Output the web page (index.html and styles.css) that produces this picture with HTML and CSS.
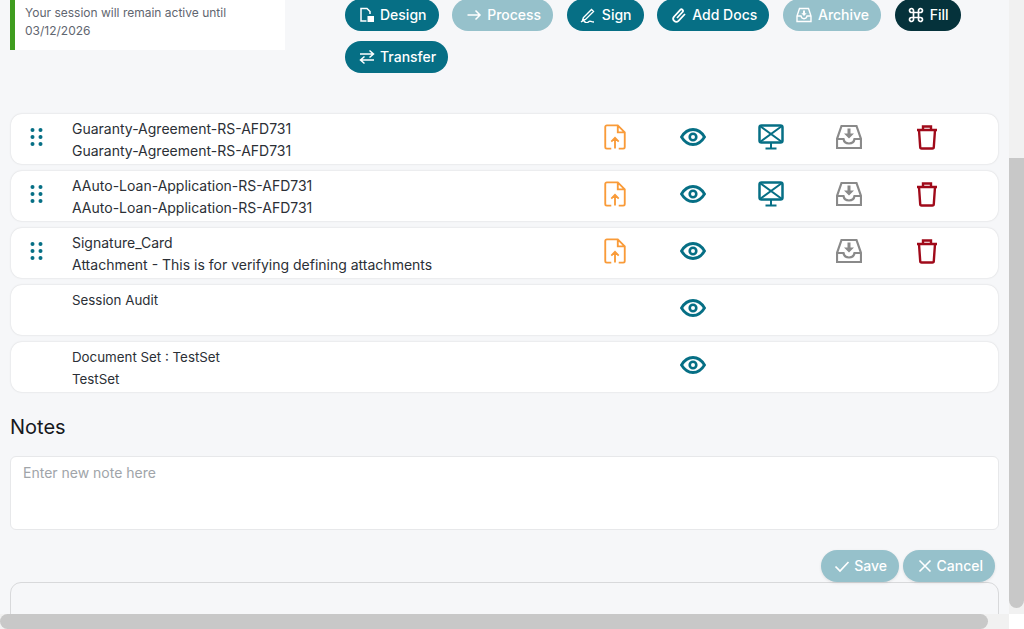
FILE: index.html
```html
<!DOCTYPE html>
<html lang="en">
<head>
<meta charset="utf-8">
<title>Session documents</title>
<link rel="stylesheet" href="styles.css">
</head>
<body>
<svg class="defs" width="0" height="0" aria-hidden="true">
  <symbol id="i-upload" viewBox="0 0 24 28"><path d="M8 26.500H3.200A1.700 1.700 0 0 1 1.500 24.800V3.200A1.700 1.700 0 0 1 3.200 1.500H15l7.500 7.500v15.800a1.700 1.700 0 0 1-1.700 1.700H16M15 1.500V9h7.500M12 26.500V15M8 19l4-4 4 4" fill="none" stroke="currentColor" stroke-width="2"/></symbol>
  <symbol id="i-eye" viewBox="0 0 26 18"><path d="M1.500 9C4.500 4 8.500 1.500 13 1.500S21.500 4 24.500 9c-3 5-7 7.500-11.500 7.500S4.500 14 1.500 9Z" fill="none" stroke="currentColor" stroke-width="2.800"/><circle cx="13" cy="9" r="3.300" fill="none" stroke="currentColor" stroke-width="2.600"/></symbol>
  <symbol id="i-screen" viewBox="0 0 26 26"><rect x="1.500" y="1.500" width="23" height="17" rx="2" fill="none" stroke="currentColor" stroke-width="2.500"/><path d="M2 2l22 16M24 2L2 18" fill="none" stroke="currentColor" stroke-width="2"/><path d="M13 19v5M7.500 24.500h11" fill="none" stroke="currentColor" stroke-width="2"/></symbol>
  <symbol id="i-inbox" viewBox="0 0 26 26"><path d="M5.500 2h15L25 15v9H1v-9L5.500 2ZM1 15h6.500c.5 3 2.500 4.500 5.500 4.500s5-1.500 5.500-4.500H25" fill="none" stroke="currentColor" stroke-width="2.200"/><path d="M11.500 4.500h3v5H18L13 14.500 8 9.500h3.500Z" fill="currentColor"/></symbol>
  <symbol id="i-trash" viewBox="0 0 22 26"><path d="M1 6h20M7 6V2.500h8V6M3 6l1.200 17a1.500 1.500 0 0 0 1.500 1.500h10.600a1.500 1.500 0 0 0 1.500-1.500L19 6" fill="none" stroke="currentColor" stroke-width="2.400"/></symbol>
  <symbol id="i-grip" viewBox="0 0 12 18"><circle cx="2" cy="2" r="2" fill="currentColor"/><circle cx="10" cy="2" r="2" fill="currentColor"/><circle cx="2" cy="9" r="2" fill="currentColor"/><circle cx="10" cy="9" r="2" fill="currentColor"/><circle cx="2" cy="16" r="2" fill="currentColor"/><circle cx="10" cy="16" r="2" fill="currentColor"/></symbol>
</svg>

<main class="page">
  <header class="top">
    <div class="session">Your session will remain active until 03/12/2026</div>
    <nav class="actions">
      <button class="pill">
        <svg class="pill-icon" viewBox="0 0 16 16"><path d="M7.500 14H2V1.500h6l3 3V7" fill="none" stroke="currentColor" stroke-width="1.500"/><path d="M8.500 9H15V15H8.500z" fill="currentColor"/></svg>Design</button>
      <button class="pill is-off">
        <svg class="pill-icon" viewBox="0 0 16 16"><path d="M1.500 8h12.500M9.500 3.500 14 8l-4.500 4.500" fill="none" stroke="currentColor" stroke-width="1.500"/></svg>Process</button>
      <button class="pill">
        <svg class="pill-icon" viewBox="0 0 16 16"><path d="M3.500 10.500 11.500 2.500l2 2-8 8-3 1ZM1 15c2-1.500 3-1.500 4 0s3 .5 4-.5 2 .5 5 .5" fill="none" stroke="currentColor" stroke-width="1.400"/></svg>Sign</button>
      <button class="pill">
        <svg class="pill-icon" viewBox="0 0 16 16"><path d="M6 11 11.500 5a1.500 1.500 0 0 0-2.200-2.200L3.200 9.500a3 3 0 0 0 4.300 4.300L14 7" fill="none" stroke="currentColor" stroke-width="1.800"/></svg>Add Docs</button>
      <button class="pill is-off">
        <svg class="pill-icon" viewBox="0 0 16 16"><path d="M3.500 1.500h9L15 9v5.500H1V9ZM1 9h4c.3 1.800 1.400 2.700 3 2.700S10.700 10.800 11 9h4" fill="none" stroke="currentColor" stroke-width="1.400"/><path d="M7 3.500h2v2.700h1.700L8 9 5.300 6.200H7Z" fill="currentColor"/></svg>Archive</button>
      <button class="pill is-dark">
        <svg class="pill-icon" viewBox="0 0 16 16"><path d="M5.500 5.500h5v5h-5ZM5.500 5.500H3.700a2 2 0 1 1 1.800-1.800ZM10.500 5.500V3.700a2 2 0 1 1 1.800 1.800ZM10.500 10.500h1.800a2 2 0 1 1-1.800 1.800ZM5.500 10.500v1.800a2 2 0 1 1-1.800-1.800Z" fill="none" stroke="currentColor" stroke-width="1.700"/></svg>Fill</button>
      <button class="pill">
        <svg class="pill-icon" viewBox="0 0 16 16"><path d="M1 5h13M10.500 1.500 14.500 5l-4 3.500M15 11H2M5.500 7.500 1.500 11l4 3.500" fill="none" stroke="currentColor" stroke-width="1.500"/></svg>Transfer</button>
    </nav>
  </header>

  <section class="docs">
    <article class="doc">
      <svg class="grip"><use href="#i-grip"/></svg>
      <div class="doc-text"><div>Guaranty-Agreement-RS-AFD731</div><div>Guaranty-Agreement-RS-AFD731</div></div>
      <div class="doc-icons">
        <svg class="ic orange"><use href="#i-upload"/></svg>
        <svg class="ic teal"><use href="#i-eye"/></svg>
        <svg class="ic teal"><use href="#i-screen"/></svg>
        <svg class="ic grey"><use href="#i-inbox"/></svg>
        <svg class="ic red"><use href="#i-trash"/></svg>
      </div>
    </article>
    <article class="doc">
      <svg class="grip"><use href="#i-grip"/></svg>
      <div class="doc-text"><div>AAuto-Loan-Application-RS-AFD731</div><div>AAuto-Loan-Application-RS-AFD731</div></div>
      <div class="doc-icons">
        <svg class="ic orange"><use href="#i-upload"/></svg>
        <svg class="ic teal"><use href="#i-eye"/></svg>
        <svg class="ic teal"><use href="#i-screen"/></svg>
        <svg class="ic grey"><use href="#i-inbox"/></svg>
        <svg class="ic red"><use href="#i-trash"/></svg>
      </div>
    </article>
    <article class="doc">
      <svg class="grip"><use href="#i-grip"/></svg>
      <div class="doc-text"><div>Signature_Card</div><div>Attachment - This is for verifying defining attachments</div></div>
      <div class="doc-icons">
        <svg class="ic orange"><use href="#i-upload"/></svg>
        <svg class="ic teal"><use href="#i-eye"/></svg>
        <span class="ic"></span>
        <svg class="ic grey"><use href="#i-inbox"/></svg>
        <svg class="ic red"><use href="#i-trash"/></svg>
      </div>
    </article>
    <article class="doc">
      <span class="grip"></span>
      <div class="doc-text is-small"><div>Session Audit</div><div>&nbsp;</div></div>
      <div class="doc-icons">
        <span class="ic"></span>
        <svg class="ic teal"><use href="#i-eye"/></svg>
      </div>
    </article>
    <article class="doc">
      <span class="grip"></span>
      <div class="doc-text is-small"><div>Document Set : TestSet</div><div>TestSet</div></div>
      <div class="doc-icons">
        <span class="ic"></span>
        <svg class="ic teal"><use href="#i-eye"/></svg>
      </div>
    </article>
  </section>

  <h2 class="notes-title">Notes</h2>
  <div class="note-input">Enter new note here</div>
  <div class="note-actions">
    <button class="pill is-off">
      <svg class="pill-icon" viewBox="0 0 16 16"><path d="M1.500 8.500 6 13 14.500 4" fill="none" stroke="currentColor" stroke-width="1.700"/></svg>Save</button>
    <button class="pill is-off">
      <svg class="pill-icon" viewBox="0 0 16 16"><path d="M2.500 2.500l11 11M13.500 2.500l-11 11" fill="none" stroke="currentColor" stroke-width="1.600"/></svg>Cancel</button>
  </div>
  <div class="note-list"></div>
</main>

<div class="bar-y"><div class="thumb-y"></div></div>
<div class="bar-x"><div class="thumb-x"></div></div>
<div class="bar-corner"></div>
</body>
</html>
```
FILE: styles.css
```css
* { box-sizing: border-box; }
html, body { margin: 0; height: 100%; overflow: hidden; }
body {
  background: #f6f7f9;
  font-family: Inter, "Liberation Sans", sans-serif;
  color: #212529;
}
.defs { position: absolute; }
.page {
  width: 1009px;
  height: 629px;
  overflow: hidden;
  padding: 0 10px;
}
.top { display: flex; height: 115px; margin-top: -1px; }
.session {
  width: 275px;
  height: 51px;
  padding: 5px 10px 0 10px;
  background: #fff;
  border-left: 5px solid #3f9c1f;
  font-size: 12px;
  line-height: 18px;
  color: #5f6670;
}
.actions {
  margin-left: 60px;
  width: 640px;
  display: flex;
  flex-wrap: wrap;
  align-content: flex-start;
  gap: 10px 13.700px;
}
.pill {
  display: inline-flex;
  align-items: center;
  gap: 5.500px;
  height: 32px;
  padding: 0 12px 1px 13.500px;
  border: 0;
  border-radius: 16px;
  background: #066f85;
  color: #fff;
  font: 500 14px Inter, "Liberation Sans", sans-serif;
}
.pill.is-off { background: #96c1cb; }
.pill.is-dark { background: #05323b; }
.pill-icon { width: 16px; height: 16px; flex: none; }
.docs { display: flex; flex-direction: column; gap: 7px; width: 989px; }
.doc {
  display: flex;
  align-items: flex-start;
  height: 50px;
  margin-left: 1px;
  width: 987px;
  background: #fff;
  border-radius: 11px;
  box-shadow: 0 0 2px rgba(0, 0, 0, .16);
}
.grip { flex: none; width: 13px; height: 18px; margin: 14px 0 0 19px; color: #066f85; }
.doc-text {
  width: 507px;
  margin-left: 29px;
  padding-top: 4px;
  font-size: 14px;
  line-height: 22px;
  color: #2b2f36;
  flex: none;
}
.doc-text.is-small { font-size: 13.333px; }
.doc-icons { display: flex; gap: 52px; padding-top: 10px; margin-left: 23px; }
.ic { width: 26px; height: 26px; flex: none; }
.orange { color: #f99b39; }
.teal { color: #066f85; }
.grey { color: #8a8a8a; }
.red { color: #a00a1a; }
.notes-title { margin: 23px 0 0; font-size: 20px; font-weight: 400; line-height: 24px; color: #16191d; }
.note-input {
  margin-top: 17px;
  width: 989px;
  height: 74px;
  padding: 7px 12px;
  background: #fff;
  border: 1px solid #e7e8ea;
  border-radius: 6px;
  font-size: 14px;
  line-height: 18px;
  color: #a0a4a9;
}
.note-actions { display: flex; justify-content: flex-end; gap: 4px; margin: 20px 0 0; width: 985px; }
.note-actions .pill { gap: 4px; box-shadow: 0 1px 3px rgba(0, 0, 0, .1); }
.note-list {
  width: 989px;
  height: 80px;
  border: 1px solid #d8d9db;
  border-radius: 11px;
}
.bar-y { position: fixed; top: 0; right: 0; width: 15px; height: 614px; background: #f1f1f1; }
.thumb-y { position: absolute; top: 158px; left: 0; width: 15px; height: 450px; background: #c8c8c8; border-radius: 0 0 8px 8px; }
.bar-x { position: fixed; left: 0; bottom: 0; width: 1009px; height: 15px; background: #f1f1f1; }
.thumb-x { position: absolute; left: 0; top: 0; width: 988px; height: 15px; background: #c8c8c8; border-radius: 8px; }
.bar-corner { position: fixed; right: 0; bottom: 0; width: 15px; height: 15px; background: #fff; }
```
